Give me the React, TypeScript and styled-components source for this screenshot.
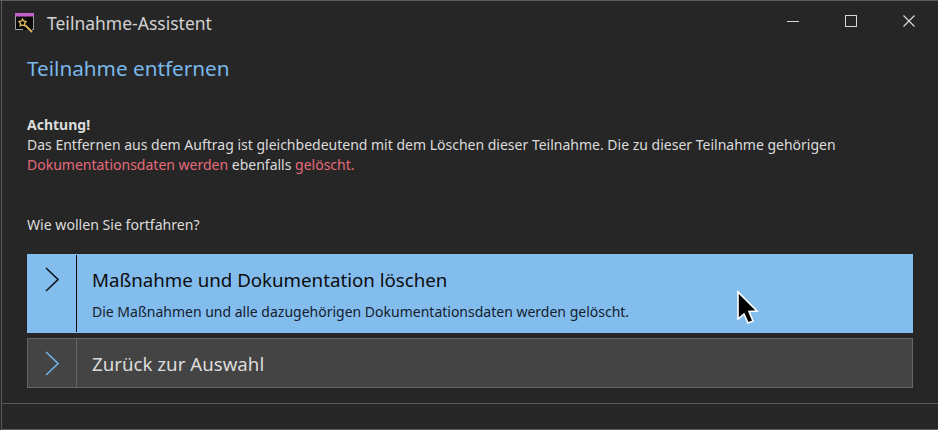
import styled, { createGlobalStyle } from "styled-components";

const GlobalStyle = createGlobalStyle`
    html, body {
        margin: 0;
        padding: 0;
        background: #262626;
    }
`;

const WizardIcon = () => (
    <svg width="20" height="20" viewBox="0 0 20 20">
        <rect x="0" y="0" width="19" height="17" fill="#0a0a0a" />
        <path d="M0.5 3 V16.5 H8" fill="none" stroke="#a0a0a0" />
        <path d="M18.5 3 V16.5 H17" fill="none" stroke="#a0a0a0" />
        <rect x="0" y="0" width="19" height="3.5" fill="#c65fcb" />
        <path d="M10.5 12.5 L17 19" stroke="#d9b760" strokeWidth="1.8" />
        <path d="M7.5 6 L8.6 8 L11 8.6 L9.6 10.4 L9.8 12.8 L7.5 11.9 L5.2 12.8 L5.4 10.4 L4 8.6 L6.4 8 Z" fill="none" stroke="#e4c262" strokeWidth="1.3" />
    </svg>
);

const Chevron = ({ color }: { color: string }) => (
    <svg width="14" height="25" viewBox="0 0 14 25">
        <path d="M1 1 L13 12.5 L1 24" fill="none" stroke={color} strokeWidth="1.6" />
    </svg>
);

const Cursor = () => (
    <svg width="23" height="35" viewBox="0 0 23 35">
        <path d="M2 2 L2 29 L8 24 L12 33 L17 31 L13 21.5 L21 21 Z" fill="#000" stroke="#fff" strokeWidth="1.6" />
    </svg>
);

export default function App() {
    return (
        <>
            <GlobalStyle />
            <Page>
                <Window>
                    <TitleBar>
                        <TitleLeft>
                            <WizardIcon />
                            <Title>Teilnahme-Assistent</Title>
                        </TitleLeft>
                        <Controls>
                            <Control>
                                <svg width="12" height="12" viewBox="0 0 12 12">
                                    <path d="M0 6.5 H12" stroke="#d8d8d8" />
                                </svg>
                            </Control>
                            <Control>
                                <svg width="12" height="12" viewBox="0 0 12 12">
                                    <rect x="0.5" y="0.5" width="11" height="11" fill="none" stroke="#d8d8d8" />
                                </svg>
                            </Control>
                            <Control>
                                <svg width="12" height="12" viewBox="0 0 12 12">
                                    <path d="M0.5 0.5 L11.5 11.5 M11.5 0.5 L0.5 11.5" stroke="#d8d8d8" strokeWidth="1.2" />
                                </svg>
                            </Control>
                        </Controls>
                    </TitleBar>
                    <Content>
                        <Heading>Teilnahme entfernen</Heading>
                        <Warning>
                            <strong>Achtung!</strong>
                            <br />
                            Das Entfernen aus dem Auftrag ist gleichbedeutend mit dem Löschen dieser Teilnahme. Die zu dieser Teilnahme gehörigen
                            <br />
                            <Danger>Dokumentationsdaten werden</Danger> ebenfalls <Danger>gelöscht.</Danger>
                        </Warning>
                        <Question>Wie wollen Sie fortfahren?</Question>
                        <Choice $active>
                            <ChoiceIcon $active>
                                <Chevron color="#101820" />
                            </ChoiceIcon>
                            <ChoiceBody>
                                <ChoiceTitle $active>Maßnahme und Dokumentation löschen</ChoiceTitle>
                                <ChoiceText>Die Maßnahmen und alle dazugehörigen Dokumentationsdaten werden gelöscht.</ChoiceText>
                            </ChoiceBody>
                            <CursorSpot>
                                <Cursor />
                            </CursorSpot>
                        </Choice>
                        <Choice>
                            <ChoiceIcon>
                                <Chevron color="#6fb0e2" />
                            </ChoiceIcon>
                            <ChoiceBody>
                                <ChoiceTitle>Zurück zur Auswahl</ChoiceTitle>
                            </ChoiceBody>
                        </Choice>
                    </Content>
                    <Footer />
                </Window>
            </Page>
        </>
    );
}

const Page = styled.div`
    width: 938px;
    height: 430px;
    padding-left: 1px;
    box-sizing: border-box;
    border-top: 1px solid #5c5c5c;
`;

const Window = styled.div`
    box-sizing: border-box;
    width: 937px;
    height: 429px;
    display: flex;
    flex-direction: column;
    background: #262626;
    border-left: 1px solid #5c5c5c;
    border-bottom: 1px solid #5c5c5c;
    font-family: "Noto Sans", "Open Sans", sans-serif;
    color: #e4e4e4;
    overflow: hidden;
`;

const TitleBar = styled.div`
    height: 43px;
    display: flex;
    align-items: center;
    justify-content: space-between;
    flex-shrink: 0;
`;

const TitleLeft = styled.div`
    display: flex;
    align-items: center;
    gap: 12px;
    padding-left: 13px;
`;

const Title = styled.span`
    font-size: 17.5px;
    color: #d2d2d2;
`;

const Controls = styled.div`
    display: flex;
    align-self: flex-start;
`;

const Control = styled.div`
    width: 58px;
    height: 40px;
    display: flex;
    align-items: center;
    justify-content: center;
`;

const Content = styled.div`
    flex: 1;
    padding: 0 25px;
`;

const Heading = styled.h1`
    margin: 10px 0 0;
    font-size: 20.7px;
    line-height: 28px;
    font-weight: 400;
    color: #7ab8ea;
`;

const Warning = styled.p`
    margin: 33px 0 0;
    font-size: 14px;
    line-height: 20px;
    color: #dcdcdc;
`;

const Danger = styled.span`
    color: #e56a7a;
`;

const Question = styled.p`
    margin: 40px 0 0;
    font-size: 14.1px;
    line-height: 20px;
    color: #dcdcdc;
`;

const Choice = styled.div<{ $active?: boolean }>`
    position: relative;
    box-sizing: border-box;
    display: flex;
    height: ${(p) => (p.$active ? "79px" : "50px")};
    margin-top: ${(p) => (p.$active ? "19px" : "5px")};
    background: ${(p) => (p.$active ? "#83bdee" : "#444444")};
    border: 1px solid ${(p) => (p.$active ? "#83bdee" : "#666666")};
`;

const ChoiceIcon = styled.div<{ $active?: boolean }>`
    width: 49px;
    flex-shrink: 0;
    display: flex;
    justify-content: center;
    padding-top: 12px;
    box-sizing: border-box;
    border-right: 1px solid ${(p) => (p.$active ? "#0a0a0a" : "#666666")};
`;

const ChoiceBody = styled.div`
    display: flex;
    flex-direction: column;
    justify-content: center;
    padding-left: 15px;
    gap: 10px;
`;

const ChoiceTitle = styled.div<{ $active?: boolean }>`
    font-size: 18.7px;
    color: ${(p) => (p.$active ? "#0c0c0c" : "#dcdcdc")};
`;

const ChoiceText = styled.div`
    font-size: 14px;
    color: #14202c;
`;

const CursorSpot = styled.div`
    position: absolute;
    left: 708px;
    top: 35px;
    line-height: 0;
`;

const Footer = styled.div`
    box-sizing: border-box;
    height: 26px;
    flex-shrink: 0;
    border-top: 1px solid #5c5c5c;
`;
